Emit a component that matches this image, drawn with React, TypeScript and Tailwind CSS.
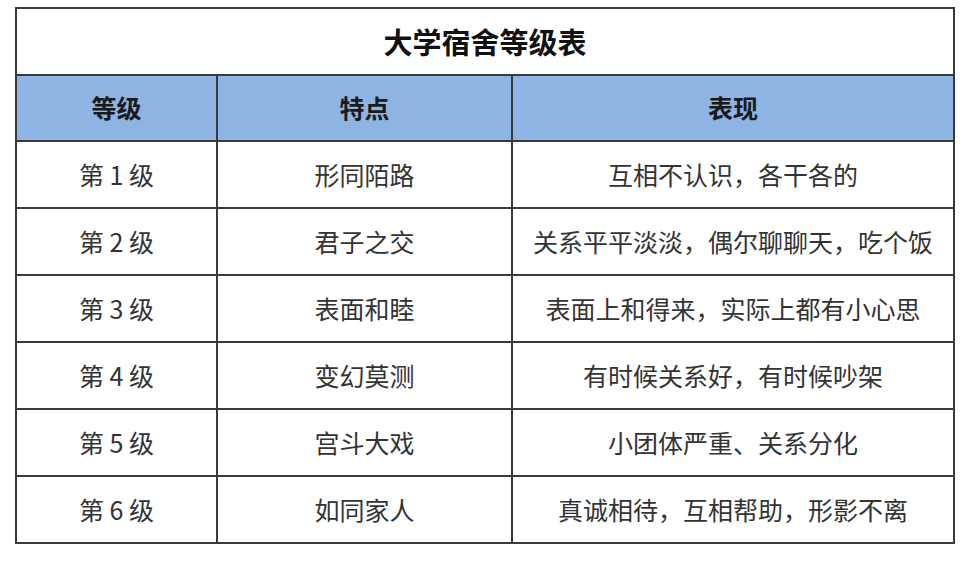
import React from 'react';

const rows: [string, string, string][] = [
  ['第 1 级', '形同陌路', '互相不认识，各干各的'],
  ['第 2 级', '君子之交', '关系平平淡淡，偶尔聊聊天，吃个饭'],
  ['第 3 级', '表面和睦', '表面上和得来，实际上都有小心思'],
  ['第 4 级', '变幻莫测', '有时候关系好，有时候吵架'],
  ['第 5 级', '宫斗大戏', '小团体严重、关系分化'],
  ['第 6 级', '如同家人', '真诚相待，互相帮助，形影不离'],
];

const cell = 'border-2 border-[#3a3a3a] text-center align-middle';

export default function App() {
  return (
    <div
      className="w-[973px] h-[566px] bg-white pt-[7px] pl-[15px]"
      style={{ fontFamily: '"Noto Sans CJK SC", "Noto Sans", sans-serif' }}
    >
      <table className="border-collapse w-[938px] table-fixed">
        <colgroup>
          <col className="w-[201px]" />
          <col className="w-[295px]" />
          <col className="w-[442px]" />
        </colgroup>
        <thead>
          <tr className="h-[67px]">
            <th colSpan={3} className={`${cell} text-[29px] font-bold text-[#111]`}>
              大学宿舍等级表
            </th>
          </tr>
          <tr className="h-[66px] bg-[#8db4e2]">
            <th className={`${cell} text-[25px] font-bold text-[#1a1a1a]`}>等级</th>
            <th className={`${cell} text-[25px] font-bold text-[#1a1a1a]`}>特点</th>
            <th className={`${cell} text-[25px] font-bold text-[#1a1a1a]`}>表现</th>
          </tr>
        </thead>
        <tbody>
          {rows.map(([level, trait, desc]) => (
            <tr key={level} className="h-[67px]">
              <td className={`${cell} text-[25px] text-[#333]`}>{level}</td>
              <td className={`${cell} text-[25px] text-[#333]`}>{trait}</td>
              <td className={`${cell} text-[25px] text-[#333]`}>{desc}</td>
            </tr>
          ))}
        </tbody>
      </table>
    </div>
  );
}
